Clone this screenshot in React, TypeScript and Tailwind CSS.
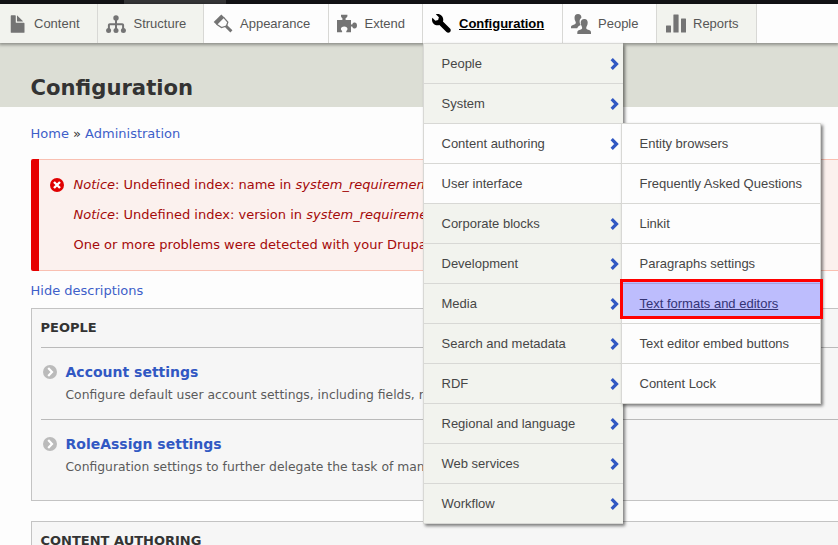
import type { ReactNode } from 'react';

const sans = 'font-["Liberation_Sans",Arial,sans-serif]';
const dejavu = 'font-["DejaVu_Sans",sans-serif]';

function FileIcon() {
  return (
    <svg viewBox="0 0 16 16" className="block h-5 w-5" fill="#747474">
      <path d="M12.502 7h-5c-.276 0-.502-.225-.502-.5v-5c0-.275-.225-.5-.5-.5h-3c-.275 0-.5.225-.5.5v13.029c0 .275.225.5.5.5h10c.275 0 .5-.225.5-.5v-7.029c0-.275-.225-.5-.498-.5z" />
      <path d="M8.502 6h4c.275 0 .34-.159.146-.354l-4.293-4.292c-.195-.195-.353-.129-.353.146v4c0 .275.225.5.5.5z" />
    </svg>
  );
}

function StructureIcon() {
  return (
    <svg viewBox="0 0 20 20" className="block h-5 w-5" fill="#747474">
      <circle cx="10" cy="4" r="2.700" />
      <path d="M9 4h2v5.200h5.200c1.200 0 1.900.8 1.900 1.900V16h-2v-4.700H11V16H9v-4.700H3.900V16h-2v-4.900c0-1.100.8-1.900 1.900-1.900H9z" />
      <circle cx="2.600" cy="16.500" r="2.500" />
      <circle cx="10" cy="16.500" r="2.500" />
      <circle cx="17.400" cy="16.500" r="2.500" />
    </svg>
  );
}

function BrushIcon() {
  return (
    <svg viewBox="0 0 20 20" className="block h-5 w-5" fill="#747474">
      <path d="M8.300.5.700 8l3.200 3.100 7.500-7.500z" />
      <path d="M10.600 3.300 14.800 8.200 13.500 12 8.500 13.500 3.600 10.200" fill="none" stroke="#747474" strokeWidth="1.300" />
      <path d="M12.700 11.700 18.400 17.400" stroke="#747474" strokeWidth="2.900" />
    </svg>
  );
}

function PuzzleIcon() {
  return (
    <svg viewBox="0 0 20 20" className="block h-5 w-5" fill="#747474">
      <path d="M0 6h5.400V4.300C4.600 3.700 4 3.100 4 2V.8h6.400V2c0 1.100-.8 1.700-1.800 2.300V6H14v4.400h1.200c.5-1.400 1.300-2 2.400-2 1.500 0 2.400 1.200 2.400 3s-.9 3-2.400 3c-1.100 0-1.900-.6-2.400-2H14v5.900H9.300v-1.400c.8-.4 1.200-1.100 1.200-1.900 0-1.400-1.300-2.500-3.300-2.500s-3.300 1.100-3.300 2.500c0 .8.4 1.500 1.200 1.900v1.400H0z" />
    </svg>
  );
}

function WrenchIcon() {
  return (
    <svg viewBox="0 0 16 16" className="block h-5 w-5" fill="#000">
      <path d="M14.416 11.586l-.01-.008v-.001l-5.656-5.656c.15-.449.252-.921.252-1.421 0-2.485-2.016-4.5-4.502-4.5-.505 0-.981.102-1.434.255l2.431 2.431-.588 2.196-2.196.588-2.445-2.445c-.162.464-.268.956-.268 1.475 0 2.486 2.014 4.5 4.500 4.500.5 0 .972-.102 1.421-.251l5.667 5.665c.781.781 2.047.781 2.828 0s.781-2.047 0-2.828z" />
    </svg>
  );
}

function PeopleIcon() {
  return (
    <svg viewBox="0 0 20 20" className="block h-5 w-5" fill="#747474">
      <path d="M7 0c2.200 0 3.400 1.300 3.400 3.700-1.500 1.100-2 2.700-1.700 4.700.2 1.100.5 1.900 1 2.600-1.100.6-2.700 1.200-3.500 3.300H0v-1.200c0-1.600 1.500-2 3.300-2.600 1.500-.5 1.900-1.600 1.200-3C3.800 6.500 3.500 5.200 3.500 3.800 3.500 1.400 4.600 0 7 0z" />
      <path d="M13.400 5c2.300 0 3.300 1.500 3.300 3.800 0 1.500-.4 2.700-1.100 3.700-.7 1.500-.4 2.600.8 3 2.300.6 3.600 1.200 3.600 2.900V20H6.300v-1.600c0-1.700 1.300-2.300 3.600-2.900 1.300-.4 1.600-1.500.9-3-.7-1-1.100-2.200-1.100-3.700C9.700 6.500 11 5 13.400 5z" />
    </svg>
  );
}

function ChartIcon() {
  return (
    <svg viewBox="0 0 20 20" className="block h-5 w-5" fill="#747474">
      <rect x="0" y="11.500" width="5" height="7" rx=".5" />
      <rect x="7.400" y=".5" width="5.200" height="18" rx=".5" />
      <rect x="15" y="4.500" width="5" height="14" rx=".5" />
    </svg>
  );
}

type Tab = { label: string; width: string; icon: ReactNode; tone: string; pad: string; gap: string; active?: boolean };

const tabs: Tab[] = [
  { label: 'Content', width: 'w-[98px]', icon: <FileIcon />, tone: 'bg-[#f2f3ee]', pad: 'pl-[7px]', gap: 'gap-[7px]' },
  { label: 'Structure', width: 'w-[106px]', icon: <StructureIcon />, tone: 'bg-[#f2f3ee]', pad: 'pl-2', gap: 'gap-[7.500px]' },
  { label: 'Appearance', width: 'w-[125px]', icon: <BrushIcon />, tone: 'bg-[#fdfdfd]', pad: 'pl-[8.500px]', gap: 'gap-[7.500px]' },
  { label: 'Extend', width: 'w-[94px]', icon: <PuzzleIcon />, tone: 'bg-[#fdfdfd]', pad: 'pl-2', gap: 'gap-[7.500px]' },
  { label: 'Configuration', width: 'w-[140px]', icon: <WrenchIcon />, tone: 'bg-[#fdfdfd]', pad: 'pl-[9px]', gap: 'gap-[7px]', active: true },
  { label: 'People', width: 'w-[94px]', icon: <PeopleIcon />, tone: 'bg-[#fdfdfd]', pad: 'pl-2', gap: 'gap-[7px]' },
  { label: 'Reports', width: 'w-[100px]', icon: <ChartIcon />, tone: 'bg-[#f2f3ee]', pad: 'pl-[9px]', gap: 'gap-[7px]' },
];

function Chevron() {
  return (
    <svg viewBox="0 0 9 12" className="block h-3 w-[9px]" fill="none" stroke="#3158c3" strokeWidth="3.200">
      <path d="M1.700 1.200 6.500 6 1.700 10.800" />
    </svg>
  );
}

const menu = [
  { label: 'People', more: true },
  { label: 'System', more: true },
  { label: 'Content authoring', more: true, open: true },
  { label: 'User interface', more: false, open: true },
  { label: 'Corporate blocks', more: true },
  { label: 'Development', more: true },
  { label: 'Media', more: true },
  { label: 'Search and metadata', more: true },
  { label: 'RDF', more: true },
  { label: 'Regional and language', more: true },
  { label: 'Web services', more: true },
  { label: 'Workflow', more: true },
];

const submenu = [
  'Entity browsers',
  'Frequently Asked Questions',
  'Linkit',
  'Paragraphs settings',
  'Text formats and editors',
  'Text editor embed buttons',
  'Content Lock',
];

function AdminItem({ title, text }: { title: string; text: string }) {
  return (
    <div className="flex h-[72px] border-t border-[#bababa] pl-[2px] pt-[15px]">
      <svg viewBox="0 0 14 14" className="mt-[2px] block h-[14px] w-[14px] shrink-0">
        <circle cx="7" cy="7" r="7" fill="#bbb" />
        <path d="M5.200 3 9 7l-3.800 4" fill="none" stroke="#fff" strokeWidth="2.200" />
      </svg>
      <div className="ml-[8.500px] whitespace-nowrap">
        <div className="text-[14px] font-bold leading-[18px] text-[#3158c3]">{title}</div>
        <div className="mt-[5px] text-[12.350px] leading-[18px] text-[#5b5b5b]">{text}</div>
      </div>
    </div>
  );
}

export default function App() {
  return (
    <div className={`relative h-[545px] w-[838px] overflow-hidden bg-[#fdfdfd] text-[13px] text-[#333] ${dejavu}`}>
      <div className="flex h-1 bg-[#131316]">
        <div className="ml-[124px] w-[102px] bg-[#353537]" />
      </div>
      <nav className={`relative z-10 flex h-[39px] bg-[#fdfdfd] text-[13px] text-[#565656] shadow-[0_1px_3px_1px_rgba(0,0,0,0.35)] ${sans}`}>
        {tabs.map((t) => (
          <div key={t.label} className={`flex h-full shrink-0 items-center border-r border-[#d8d8d5] ${t.width} ${t.tone} ${t.pad} ${t.gap}`}>
            {t.icon}
            <span className={t.active ? 'font-bold text-black underline' : ''}>{t.label}</span>
          </div>
        ))}
      </nav>

      <header className="h-16 bg-[#dcded5] pl-[30.500px] pt-8">
        <h1 className="text-[21.150px] font-bold leading-[26px]">Configuration</h1>
      </header>

      <main className="w-[1000px] pl-[31px] pt-[17px]">
        <div className="-ml-[0.500px] h-[35px] leading-[20px]">
          <span className="text-[#3e5fc9]">Home</span> » <span className="text-[#3e5fc9]">Administration</span>
        </div>
        <div className="flex h-[112px] rounded-l-[2px] bg-[#e60000] pl-2">
          <div className="flex grow border-y border-[#f9c0b2] bg-[#fbf1ee] pl-[11px] text-[#a50a0a]">
            <svg viewBox="0 0 14 14" className="mt-[18px] block h-[14px] w-[14px]">
              <circle cx="7" cy="7" r="7" fill="#e00000" />
              <path d="M4 4l6 6M10 4l-6 6" stroke="#fff" strokeWidth="2.400" />
            </svg>
            <div className="ml-[9.500px] pt-[10px] leading-[30px]">
              <p><em>Notice</em>: Undefined index: name in <em>system_requirements()</em></p>
              <p><em>Notice</em>: Undefined index: version in <em>system_requirements()</em></p>
              <p>One or more problems were detected with your Drupal installation.</p>
            </div>
          </div>
        </div>
        <div className="-ml-[0.500px] h-[37px] pt-[10px] leading-[20px] text-[#3e5fc9]">Hide descriptions</div>
        <section className="h-[193px] border border-[#c3c3c3] bg-[#f6f6f6] pl-[9px]">
          <h2 className="-ml-[0.500px] h-[38px] pt-[9px] text-[13px] font-bold leading-[20px]">PEOPLE</h2>
          <AdminItem title="Account settings" text="Configure default user account settings, including fields, registration requirements." />
          <AdminItem title="RoleAssign settings" text="Configuration settings to further delegate the task of managing user's roles." />
        </section>
        <section className="mt-5 h-[193px] border border-[#c3c3c3] bg-[#f6f6f6] pl-[9px]">
          <h2 className="-ml-[0.500px] pt-[9px] text-[13px] font-bold leading-[20px]">CONTENT AUTHORING</h2>
        </section>
      </main>

      <div className={`absolute left-[423px] top-[43px] z-20 w-[200px] border-b border-l border-[#d8d8d5] text-[13px] text-[#464646] shadow-[2px_2px_3px_rgba(0,0,0,0.5)] ${sans}`}>
        {menu.map((m) => (
          <div key={m.label} className={`flex h-10 items-center justify-between border-t border-[#d8d8d5] pl-[17.500px] pr-1 pt-px ${m.open ? 'bg-[#fdfdfd]' : 'bg-[#f2f3ee]'}`}>
            <span>{m.label}</span>
            {m.more && <Chevron />}
          </div>
        ))}
      </div>

      <div className={`absolute left-[621px] top-[123px] z-30 w-[200px] border-x border-b border-[#d8d8d5] bg-[#fdfdfd] text-[13px] text-[#464646] shadow-[2px_2px_3px_rgba(0,0,0,0.5)] ${sans}`}>
        {submenu.map((s) => (
          <div key={s} className="flex h-10 items-center border-t border-[#d8d8d5] pl-[17.500px] pt-px">
            <span className={s === 'Text formats and editors' ? 'underline' : ''}>{s}</span>
          </div>
        ))}
      </div>
      <div className="absolute left-[620px] top-[279px] z-40 h-10 w-[203px] border-[3px] border-[#ff0000] bg-[#0000ff]/25" />
    </div>
  );
}
